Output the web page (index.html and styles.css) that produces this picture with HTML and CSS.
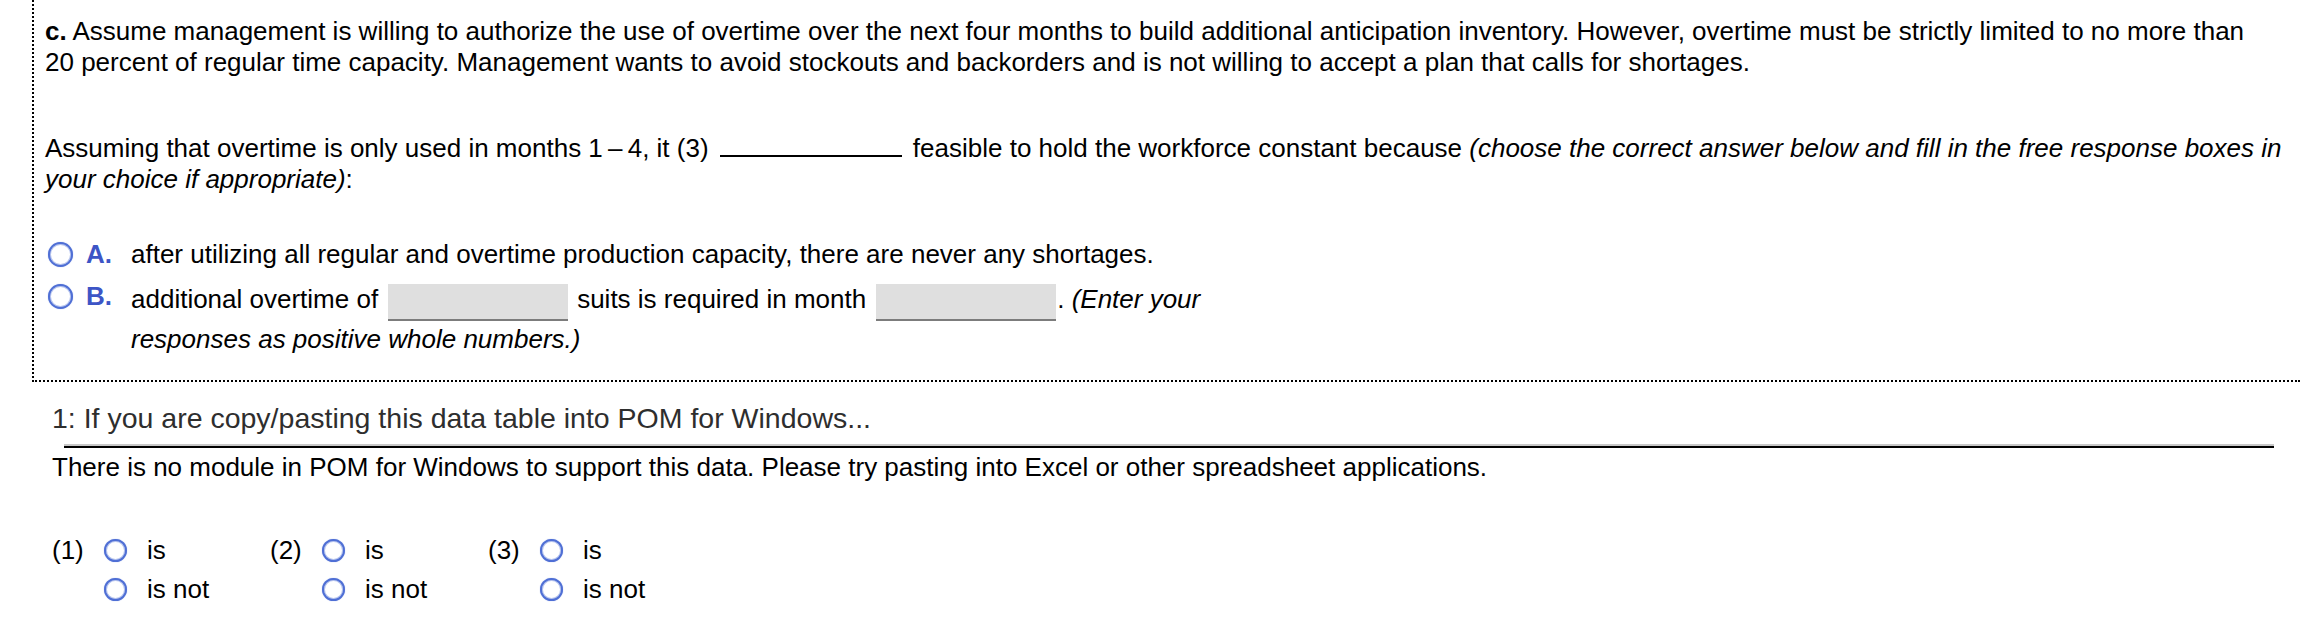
FILE: index.html
```html
<!DOCTYPE html>
<html lang="en">
<head>
<meta charset="utf-8">
<title>Question c</title>
<link rel="stylesheet" href="styles.css">
</head>
<body>
<div class="part">
  <p class="para"><b>c.</b> Assume management is willing to authorize the use of overtime over the next four months to build additional anticipation inventory. However, overtime must be strictly limited to no more than<br>20 percent of regular time capacity. Management wants to avoid stockouts and backorders and is not willing to accept a plan that calls for shortages.</p>
  <p class="para p2">Assuming that overtime is only used in months 1&#8201;&#8211;&#8201;4, it (3)<span class="blank"></span> feasible to hold the workforce constant because <i>(choose the correct answer below and fill in the free response boxes in your choice if appropriate)</i>:</p>
  <div class="options">
    <div class="opt">
      <span class="radio"></span>
      <span class="letter">A.</span>
      <span class="otext">after utilizing all regular and overtime production capacity, there are never any shortages.</span>
    </div>
    <div class="opt opt-b">
      <span class="radio"></span>
      <span class="letter">B.</span>
      <span class="otext">additional overtime of<span class="box"></span>suits is required in month<span class="box box2"></span>. <i>(Enter your responses as positive whole numbers.)</i></span>
    </div>
  </div>
</div>
<div class="help">
  <div class="help-title">1: If you are copy/pasting this data table into POM for Windows...</div>
  <div class="help-rule"></div>
  <div class="help-body">There is no module in POM for Windows to support this data. Please try pasting into Excel or other spreadsheet applications.</div>
</div>
<div class="answers">
  <div class="ans">
    <span class="num">(1)</span>
    <div class="choices">
      <div class="choice"><span class="radio"></span>is</div>
      <div class="choice"><span class="radio"></span>is not</div>
    </div>
  </div>
  <div class="ans">
    <span class="num">(2)</span>
    <div class="choices">
      <div class="choice"><span class="radio"></span>is</div>
      <div class="choice"><span class="radio"></span>is not</div>
    </div>
  </div>
  <div class="ans">
    <span class="num">(3)</span>
    <div class="choices">
      <div class="choice"><span class="radio"></span>is</div>
      <div class="choice"><span class="radio"></span>is not</div>
    </div>
  </div>
</div>
</body>
</html>
```
FILE: styles.css
```css
html, body {
  margin: 0;
  background: #fff;
}
body {
  font-family: "Liberation Sans", Arial, sans-serif;
  font-size: 26px;
  color: #000;
  width: 2300px;
}
.part {
  margin-left: 32px;
  border-left: 2px dotted #000;
  border-bottom: 2px dotted #000;
  padding: 16px 6px 23px 11px;
}
.para {
  margin: 0;
  line-height: 31px;
}
.p2 {
  margin-top: 55px;
}
.blank {
  display: inline-block;
  width: 182px;
  height: 20px;
  border-bottom: 2px solid #000;
  margin: 0 4px 0 11px;
}
.options {
  margin-top: 44px;
}
.opt {
  display: flex;
  align-items: flex-start;
}
.opt-b {
  margin-top: 11px;
}
.radio {
  flex: none;
  box-sizing: border-box;
  width: 25px;
  height: 25px;
  border-radius: 50%;
  border: 2px solid #4f6fd5;
  box-shadow: inset 0 0 0 1px #b6c4ee, 0 0 1px #8fa3e3;
  background: #fff;
}
.opt .radio {
  margin: 3px 13px 0 3px;
}
.letter {
  flex: none;
  width: 45px;
  font-weight: bold;
  color: #3d55c6;
  line-height: 31px;
}
.otext {
  line-height: 31px;
}
.opt-b .otext {
  line-height: 36px;
  width: 1130px;
}
.box {
  display: inline-block;
  width: 180px;
  height: 35px;
  background: #dfdfdf;
  border-bottom: 2px solid #7c7c7c;
  vertical-align: -13px;
  margin: 0 9px 0 10px;
}
.box2 {
  margin-right: 1px;
}
.help {
  margin-top: 19px;
  padding-left: 52px;
}
.help-title {
  font-size: 28.5px;
  line-height: 34px;
  color: #2e2e2e;
  padding-bottom: 9px;
}
.help-rule {
  height: 2px;
  background: #c8c8c8;
  border-bottom: 2px solid #000;
  margin: 0 26px 0 12px;
}
.help-body {
  line-height: 31px;
  padding-top: 4px;
}
.answers {
  display: flex;
  padding-left: 52px;
  margin-top: 48px;
}
.ans {
  display: flex;
  width: 218px;
}
.num {
  width: 52px;
  line-height: 39px;
}
.choice {
  display: flex;
  align-items: flex-start;
  height: 39px;
  line-height: 39px;
}
.choice .radio {
  width: 23px;
  height: 23px;
  margin: 8px 20px 0 0;
}
```
